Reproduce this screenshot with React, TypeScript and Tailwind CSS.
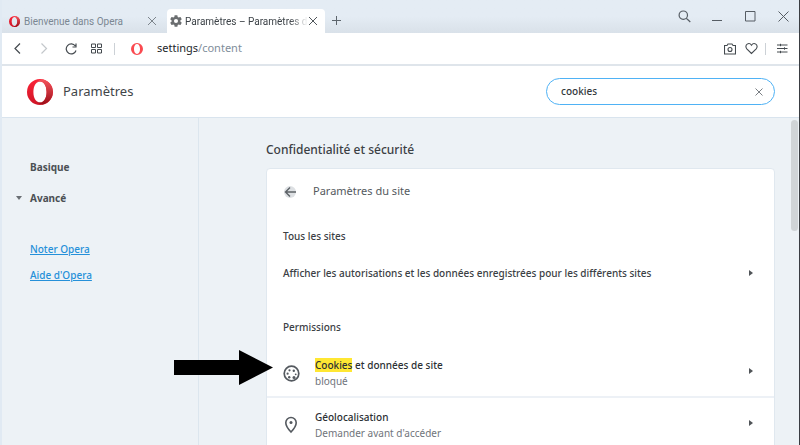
import React, { useState } from "react";

function OperaLogo({ className, light }: { className: string; light?: boolean }) {
  return (
    <svg viewBox="0 0 26 26" className={className} aria-hidden="true">
      <defs>
        <linearGradient id="ring" x1="0" y1="0" x2="0" y2="1">
          <stop offset="0" stopColor="#fb2438" />
          <stop offset="1" stopColor="#cf1426" />
        </linearGradient>
        <linearGradient id="side" x1="0" y1="0" x2="0" y2="1">
          <stop offset="0" stopColor="#f4555c" />
          <stop offset="1" stopColor="#9c0d18" />
        </linearGradient>
      </defs>
      <path
        fillRule="evenodd"
        fill={light ? "#fa4a50" : "url(#ring)"}
        d="M13 0a13 13 0 1 0 0 26a13 13 0 1 0 0-26zM13 2.4c3.900 0 6.600 4.500 6.600 10.600s-2.700 10.600-6.600 10.600S6.400 19.100 6.400 13s2.700-10.600 6.600-10.600z"
      />
      {!light && (
        <path
          fill="url(#side)"
          d="M8.700 4.700C10 3.200 11.500 2.400 13 2.400c3.900 0 6.600 4.500 6.600 10.600s-2.700 10.600-6.600 10.600c-1.500 0-3-.8-4.300-2.300c2 3 5 4.700 8.300 4A13 13 0 0 0 17 .7c-3.300-.7-6.300 1-8.300 4z"
        />
      )}
    </svg>
  );
}

function Stroke({ size, d, className = "", width = 1 }: { size: number; d: string; className?: string; width?: number }) {
  return (
    <svg
      width={size}
      height={size}
      viewBox={`0 0 ${size} ${size}`}
      fill="none"
      stroke="currentColor"
      strokeWidth={width}
      className={`shrink-0 ${className}`}
      aria-hidden="true"
    >
      <path d={d} />
    </svg>
  );
}

function Gear() {
  return (
    <svg viewBox="0 0 24 24" className="size-[14px] shrink-0 text-[#6b6e70]" fill="currentColor" aria-hidden="true">
      <path d="M19.430 12.980c.04-.32.07-.64.07-.98s-.03-.66-.07-.98l2.110-1.650c.19-.15.24-.42.12-.64l-2-3.460c-.12-.22-.39-.3-.61-.22l-2.490 1c-.52-.4-1.080-.73-1.690-.98l-.38-2.650A.49.49 0 0 0 14 2h-4c-.25 0-.46.18-.49.420l-.38 2.650c-.61.25-1.170.59-1.690.98l-2.490-1c-.23-.09-.49 0-.61.22l-2 3.460c-.13.22-.07.49.12.64l2.110 1.650c-.04.32-.07.65-.07.98s.03.66.07.98l-2.110 1.650c-.19.15-.24.42-.12.64l2 3.460c.12.22.39.3.61.22l2.490-1c.52.4 1.080.73 1.690.98l.38 2.650c.03.24.24.42.49.42h4c.25 0 .46-.18.49-.42l.38-2.650c.61-.25 1.170-.59 1.690-.98l2.490 1c.23.09.49 0 .61-.22l2-3.460c.12-.22.07-.49-.12-.64l-2.110-1.650zM12 15.500a3.500 3.500 0 1 1 0-7a3.500 3.500 0 0 1 0 7z" />
    </svg>
  );
}

function CookieIcon() {
  return (
    <svg viewBox="0 0 17 17" className="size-[17px] text-[#54595f]" aria-hidden="true">
      <circle cx="8.500" cy="8.500" r="7.300" fill="none" stroke="currentColor" strokeWidth="1.700" />
      <g fill="currentColor">
        <circle cx="6.500" cy="5.300" r="1.100" />
        <circle cx="10.800" cy="5.700" r="1.200" />
        <circle cx="4.600" cy="8.700" r="1.100" />
        <circle cx="12.700" cy="9.300" r=".9" />
        <circle cx="6.200" cy="12.300" r="1.200" />
        <circle cx="11" cy="12.500" r="1.500" />
      </g>
    </svg>
  );
}

function PinIcon() {
  return (
    <svg viewBox="0 0 14 18" className="h-[18px] w-[14px] text-[#54595f]" aria-hidden="true">
      <path
        d="M7 1.500a5.200 5.200 0 0 0-5.200 5.200C1.800 10.500 7 16 7 16s5.200-5.500 5.200-9.300A5.200 5.200 0 0 0 7 1.500z"
        fill="none"
        stroke="currentColor"
        strokeWidth="1.600"
      />
      <circle cx="7" cy="6.500" r="1.500" fill="currentColor" />
    </svg>
  );
}

function Chevron() {
  return (
    <svg viewBox="0 0 4 6" className="h-[6px] w-[4px] shrink-0" aria-hidden="true">
      <path d="M0 0l4 3l-4 3z" fill="#505458" />
    </svg>
  );
}

const CROSS = "M1 1l8 8M9 1l-8 8";

function TabStrip() {
  return (
    <div className="flex h-[33px] shrink-0 items-end bg-linear-to-b from-[#e4ecf4] from-50% to-[#d9e1e9] pr-[6px] pl-1">
      <div role="tablist" className="flex items-end font-['Roboto','Noto_Sans',sans-serif]">
        <div className="flex h-6 w-[161px] items-center pl-[3px]">
          <button role="tab" className="flex grow items-center gap-1 whitespace-nowrap text-[#7b8792]">
            <OperaLogo className="size-[11px] shrink-0" />
            <span>Bienvenue dans Opera</span>
          </button>
          <button aria-label="Fermer l'onglet" className="mr-[10px] text-[#7d858c]">
            <Stroke size={10} d={CROSS} />
          </button>
        </div>
        <div className="flex h-6 w-[158px] items-center rounded-t-sm bg-white pl-[2px]">
          <button role="tab" aria-selected="true" className="flex min-w-0 grow items-center gap-[2px] text-[#3c4247]">
            <Gear />
            <span className="grow mask-r-from-85% text-left whitespace-nowrap">Paramètres – Paramètres d</span>
          </button>
          <button aria-label="Fermer l'onglet" className="mr-[7px] shrink-0 text-[#50565b]">
            <Stroke size={10} d={CROSS} />
          </button>
        </div>
      </div>
      <button aria-label="Nouvel onglet" className="mb-[8px] ml-[7px] text-[#5d656c]">
        <Stroke size={9} d="M4.500 0v9M0 4.500h9" />
      </button>
      <div className="mb-[10px] ml-auto flex items-center text-[#565d64]">
        <button aria-label="Rechercher dans les onglets" className="mr-[21px]">
          <Stroke size={13} d="M9.500 5.200a4.200 4.200 0 1 1-8.400 0a4.200 4.200 0 0 1 8.400 0zM8.300 8.300l4 3.700" width={1.2} />
        </button>
        <button aria-label="Réduire" className="mr-[22px]">
          <Stroke size={11} d="M0 9.500h10" />
        </button>
        <button aria-label="Agrandir" className="mr-[22px]">
          <Stroke size={11} d="M.5.5h9.500v9.500H.5z" />
        </button>
        <button aria-label="Fermer" className="mr-1">
          <Stroke size={11} d="M.5.5l10 10M10.500.5l-10 10" />
        </button>
      </div>
    </div>
  );
}

function Toolbar() {
  return (
    <div className="flex h-[33px] shrink-0 items-center border-b-2 border-[#dfe5eb] bg-white pr-[11px] pl-[12px] text-[#444a4f]">
      <button aria-label="Précédent">
        <Stroke size={11} d="M6 .5l-5 5l5 5" width={1.2} />
      </button>
      <button aria-label="Suivant" className="ml-[15px] text-[#c3c7cb]">
        <Stroke size={11} d="M1.500.5l5 5l-5 5" width={1.2} />
      </button>
      <button aria-label="Actualiser" className="ml-[14px]">
        <Stroke size={12} d="M10.300 3A5 5 0 1 0 11 7.500M11 .5v3.500H7.500" width={1.2} />
      </button>
      <button aria-label="Speed Dial" className="ml-[14px]">
        <Stroke size={11} d="M.5 1h4v3.500h-4zM6.500 1h4v3.500h-4zM.5 6.500h4V10h-4zM6.500 6.500h4V10h-4z" />
      </button>
      <div className="mx-3 h-3 w-px bg-[#ccd1d6]" />
      <OperaLogo light className="ml-[4px] size-[12px]" />
      <div className="ml-[14px] text-[11px] text-[#23272b]">
        settings<span className="text-[#7f8e9b]">/content</span>
      </div>
      <div className="ml-auto flex items-center">
        <button aria-label="Capture d'écran">
          <Stroke
            size={12}
            d="M.5 2.500h2.500l1-1.500h4l1 1.500h2.500v8.500H.5zM8 6.500a2 2 0 1 1-4 0a2 2 0 0 1 4 0z"
            width={1.1}
          />
        </button>
        <button aria-label="Ajouter aux favoris" className="ml-[9px]">
          <Stroke
            size={13}
            d="M6.500 11.500L1.800 6.800C.4 5.300.7 3 2.200 2.100C3.700 1.200 5.500 1.700 6.500 3.300C7.500 1.700 9.300 1.200 10.800 2.100C12.300 3 12.600 5.300 11.200 6.800z"
            width={1.1}
          />
        </button>
        <div className="ml-[7px] h-3 w-px bg-[#ccd1d6]" />
        <button aria-label="Configuration simplifiée" className="ml-[11px]">
          <Stroke size={11} d="M0 2h10.500M0 5.500h10.500M0 9h10.500M3.500.8v2.400M7.500 4.300v2.400M3.500 7.800v2.400" />
        </button>
      </div>
    </div>
  );
}

function SettingsHeader() {
  const [query, setQuery] = useState("cookies");
  return (
    <header className="flex h-[52px] shrink-0 items-center border-b border-[#d9e4ee] bg-white pr-6 pl-[25px]">
      <OperaLogo className="size-[26px]" />
      <h1 className="ml-[10px] text-[13px] text-[#3f4549]">Paramètres</h1>
      <div className="ml-auto flex h-[27px] w-[229px] items-center rounded-full border border-[#4fb2f5] pr-[10px] pl-[14px]">
        <input
          type="text"
          aria-label="Rechercher dans les paramètres"
          value={query}
          onChange={(e) => setQuery(e.target.value)}
          className="min-w-0 grow bg-transparent font-medium text-[#33383c] outline-none"
        />
        <button aria-label="Effacer la recherche" onClick={() => setQuery("")} className="text-[#7a7f84]">
          <Stroke size={10} d="M1.500 1.500l7 7M8.500 1.500l-7 7" />
        </button>
      </div>
    </header>
  );
}

function Sidebar() {
  return (
    <nav className="w-[197px] shrink-0 border-r border-[#dce6ee] pt-[41px]">
      <button className="ml-7 block leading-4 font-bold text-[#4b5054]">Basique</button>
      <button className="mt-[15px] ml-[14px] flex items-center gap-2 leading-4 font-bold text-[#4b5054]">
        <svg viewBox="0 0 6 4" className="h-[4px] w-[6px]" aria-hidden="true">
          <path d="M0 0h6l-3 4z" fill="#6a6f74" />
        </svg>
        Avancé
      </button>
      <a href="#noter" className="mt-[35px] ml-7 block w-fit leading-4 font-medium text-[#2590d9] underline">
        Noter Opera
      </a>
      <a href="#aide" className="mt-[10px] ml-7 block w-fit leading-4 font-medium text-[#2590d9] underline">
        Aide d'Opera
      </a>
    </nav>
  );
}

function PermissionRow({ icon, title, status }: { icon: React.ReactNode; title: React.ReactNode; status: string }) {
  return (
    <button className="flex h-[50px] w-full items-center pr-[21px] pl-[14px] text-left">
      <span className="flex w-5 justify-center pt-1">{icon}</span>
      <span className="ml-[14px] grow pt-1">
        <span className="block leading-4 font-medium text-[#2c3034]">{title}</span>
        <span className="block leading-4 text-[#6f747b]">{status}</span>
      </span>
      <Chevron />
    </button>
  );
}

function SiteSettings() {
  return (
    <main className="min-w-0 grow pt-[22px] pr-4 pl-[67px]">
      <h2 className="text-xs leading-5 font-medium text-[#3b4044]">Confidentialité et sécurité</h2>
      <section className="mt-2 rounded-t border border-[#e0e8ef] bg-white">
        <div className="flex h-[45px] items-center gap-[17px] pl-[17px]">
          <button aria-label="Retour" className="rounded-full bg-[#dde0e3] text-[#5c6166]">
            <Stroke size={12} d="M12 6H1.500M6 1.500L1.500 6L6 10.500" width={1.4} />
          </button>
          <h3 className="text-[11px] text-[#54595e]">Paramètres du site</h3>
        </div>
        <h4 className="flex h-11 items-center px-4 font-medium text-[#3b4044]">Tous les sites</h4>
        <button className="flex h-[30px] w-full items-center justify-between pr-[21px] pl-4 font-medium text-[#3b4044]">
          Afficher les autorisations et les données enregistrées pour les différents sites
          <Chevron />
        </button>
        <h4 className="mt-6 mb-1 flex h-[30px] items-center px-4 font-medium text-[#3b4044]">Permissions</h4>
        <PermissionRow
          icon={<CookieIcon />}
          title={
            <>
              <mark className="bg-[#ffe733] text-inherit">Cookies</mark> et données de site
            </>
          }
          status="bloqué"
        />
        <div className="h-[2px] bg-[#edf1f6]" />
        <PermissionRow icon={<PinIcon />} title="Géolocalisation" status="Demander avant d'accéder" />
      </section>
    </main>
  );
}

export default function App() {
  return (
    <div className="relative flex h-screen flex-col overflow-hidden border-r border-l-2 border-r-[#3a3d42] border-l-[#e1eaf3] bg-[#edf2f6] font-['Noto_Sans','Open_Sans',sans-serif] text-[10px]">
      <TabStrip />
      <Toolbar />
      <SettingsHeader />
      <div className="flex min-h-0 grow overflow-hidden">
        <Sidebar />
        <SiteSettings />
        <div className="w-2 shrink-0 pt-[2px]">
          <div className="h-[111px] w-[7px] rounded-full bg-[#d0d4d7]" />
        </div>
      </div>
      <svg viewBox="0 0 100 35" className="absolute top-[350px] left-[172px] h-[35px] w-[100px]" aria-hidden="true">
        <path d="M0 10h65V0l34 17.500L65 35V25H0z" fill="#000" />
      </svg>
    </div>
  );
}
